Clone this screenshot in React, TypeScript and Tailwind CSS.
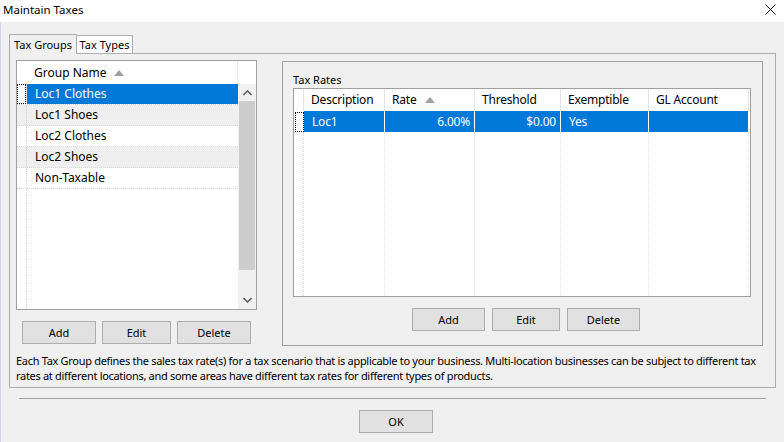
const FONT = "font-['Noto_Sans','Liberation_Sans',sans-serif]";

const groups = ["Loc1 Clothes", "Loc1 Shoes", "Loc2 Clothes", "Loc2 Shoes", "Non-Taxable"];

function SortUp() {
  return (
    <svg width="10" height="6" viewBox="0 0 10 6" className="ml-[8px]">
      <path d="M0 6 L5 0 L10 6 Z" fill="#a0a0a0" />
    </svg>
  );
}

function Button({ label, w }: { label: string; w: string }) {
  return (
    <div
      className={`${w} h-[23px] flex items-center justify-center border border-[#adadad] bg-[#e1e1e1] text-black text-[11px]`}
    >
      {label}
    </div>
  );
}

function FocusRect() {
  return <div className="w-[9px] h-[20px] border border-dotted border-black" />;
}

function GroupList() {
  return (
    <div className="w-[241px] h-[250px] border border-[#a0a0a0] bg-white flex text-[12px]">
      <div className="flex-1 flex flex-col">
        <div className="h-[23px] flex items-center border-r border-[#e5e5e5]">
          <div className="w-[10px] h-full" />
          <div className="flex items-center pl-[7px]">
            Group Name
            <SortUp />
          </div>
        </div>
        {groups.map((g, i) => {
          const sel = i === 0;
          const alt = i % 2 === 1;
          return (
            <div
              key={g}
              className={`h-[21px] flex border-b border-dotted border-[#d8d8d8] ${alt ? "bg-[#efefef]" : "bg-white"}`}
            >
              <div className="w-[10px] flex items-center justify-center border-r border-dotted border-[#d0d0d0]">
                {sel && <FocusRect />}
              </div>
              <div
                className={`flex-1 flex items-center pl-[8px] ${sel ? "bg-[#0078d7] text-white" : ""}`}
              >
                {g}
              </div>
            </div>
          );
        })}
        <div className="flex-1 flex">
          <div className="w-[10px] border-r border-dotted border-[#d0d0d0]" />
        </div>
      </div>
      <div className="w-[18px] flex flex-col">
        <div className="h-[23px] bg-white" />
        <div className="flex-1 flex flex-col bg-[#f0f0f0]">
          <div className="h-[17px] flex items-center justify-center">
            <svg width="9" height="6" viewBox="0 0 9 6">
              <path d="M0.5 5 L4.5 1 L8.5 5" stroke="#606060" strokeWidth="1.6" fill="none" />
            </svg>
          </div>
          <div className="mx-[1px] h-[169px] bg-[#cdcdcd]" />
          <div className="flex-1" />
          <div className="h-[18px] flex items-center justify-center">
            <svg width="9" height="6" viewBox="0 0 9 6">
              <path d="M0.5 1 L4.5 5 L8.5 1" stroke="#606060" strokeWidth="1.6" fill="none" />
            </svg>
          </div>
        </div>
      </div>
    </div>
  );
}

const cols = [
  { name: "Description", w: "w-[81px]", val: "Loc1", right: false, sort: false },
  { name: "Rate", w: "w-[90px]", val: "6.00%", right: true, sort: true },
  { name: "Threshold", w: "w-[86px]", val: "$0.00", right: true, sort: false },
  { name: "Exemptible", w: "w-[88px]", val: "Yes", right: false, sort: false },
  { name: "GL Account", w: "w-[100px]", val: "", right: false, sort: false },
];

function RatesGrid() {
  return (
    <div className="w-[458px] h-[209px] border border-[#a0a0a0] bg-white flex flex-col text-[12px] tracking-[-0.2px]">
      <div className="h-[22px] flex">
        <div className="w-[10px] border-r border-[#e5e5e5]" />
        {cols.map((c) => (
          <div key={c.name} className={`${c.w} flex items-center pl-[7px] border-r border-[#e5e5e5]`}>
            {c.name}
            {c.sort && <SortUp />}
          </div>
        ))}
      </div>
      <div className="h-[21px] flex">
        <div className="w-[10px] flex items-center justify-center bg-white">
          <FocusRect />
        </div>
        {cols.map((c) => (
          <div
            key={c.name}
            className={`${c.w} flex items-center bg-[#0078d7] text-white border-r border-white ${c.right ? "justify-end pr-[4px]" : "pl-[8px]"}`}
          >
            {c.val}
          </div>
        ))}
      </div>
      <div className="flex-1 flex">
        <div className="w-[10px] border-r border-dotted border-[#d8d8d8]" />
        {cols.map((c) => (
          <div key={c.name} className={`${c.w} border-r border-dotted border-[#e0e0e0]`} />
        ))}
      </div>
    </div>
  );
}

export default function App() {
  return (
    <div className={`w-[784px] h-[442px] bg-[#f0f0f0] text-[11px] leading-none text-black ${FONT} flex flex-col overflow-hidden`}>
      <div className="h-[22px] bg-white flex items-center justify-between pl-[3px] pr-[8px]">
        <span className="-mt-[3px] text-[11.5px]">Maintain Taxes</span>
        <svg width="11" height="11" viewBox="0 0 11 11" className="-mt-[3px]">
          <path d="M0.5 0.5 L10.5 10.5 M10.5 0.5 L0.5 10.5" stroke="#000" strokeWidth="1" />
        </svg>
      </div>
      <div className="flex-1 flex flex-col border-l border-[#c9d6ea] pl-[8px]">
        <div className="mt-[11px] flex items-end h-[20px]">
          <div className="w-[68px] h-[20px] flex items-center justify-center border border-b-0 border-[#adadad] bg-[#f0f0f0] relative z-10 -mb-px pb-px">
            Tax Groups
          </div>
          <div className="w-[56px] h-[18px] flex items-center justify-center border border-l-0 border-b-0 border-[#adadad] bg-white">
            Tax Types
          </div>
        </div>
        <div className="w-[767px] h-[335px] border border-[#adadad] flex flex-col">
          <div className="flex pl-[6px] pt-[6px]">
            <div className="flex flex-col">
              <GroupList />
              <div className="mt-[11px] pl-[6px] flex gap-[6px]">
                <Button label="Add" w="w-[74px]" />
                <Button label="Edit" w="w-[69px]" />
                <Button label="Delete" w="w-[74px]" />
              </div>
            </div>
            <div className="ml-[25px] mt-[1px] w-[481px] h-[285px] border border-[#a0a0a0] flex flex-col px-[10px]">
              <div className="h-[26px] flex items-center pt-[9px]">Tax Rates</div>
              <RatesGrid />
              <div className="mt-[11px] pl-[119px] flex gap-[7px]">
                <Button label="Add" w="w-[73px]" />
                <Button label="Edit" w="w-[68px]" />
                <Button label="Delete" w="w-[73px]" />
              </div>
            </div>
          </div>
          <div className="mt-[7px] pl-[6px] leading-[15px] whitespace-nowrap tracking-[-0.3px]">
            Each Tax Group defines the sales tax rate(s) for a tax scenario that is applicable to your business. Multi-location businesses can be subject to different tax
            <br />
            rates at different locations, and some areas have different tax rates for different types of products.
          </div>
        </div>
        <div className="mt-[10px] ml-[10px] w-[747px] h-px bg-[#a0a0a0]" />
        <div className="mt-[11px] flex justify-center pr-[1px]">
          <Button label="OK" w="w-[74px]" />
        </div>
      </div>
    </div>
  );
}
